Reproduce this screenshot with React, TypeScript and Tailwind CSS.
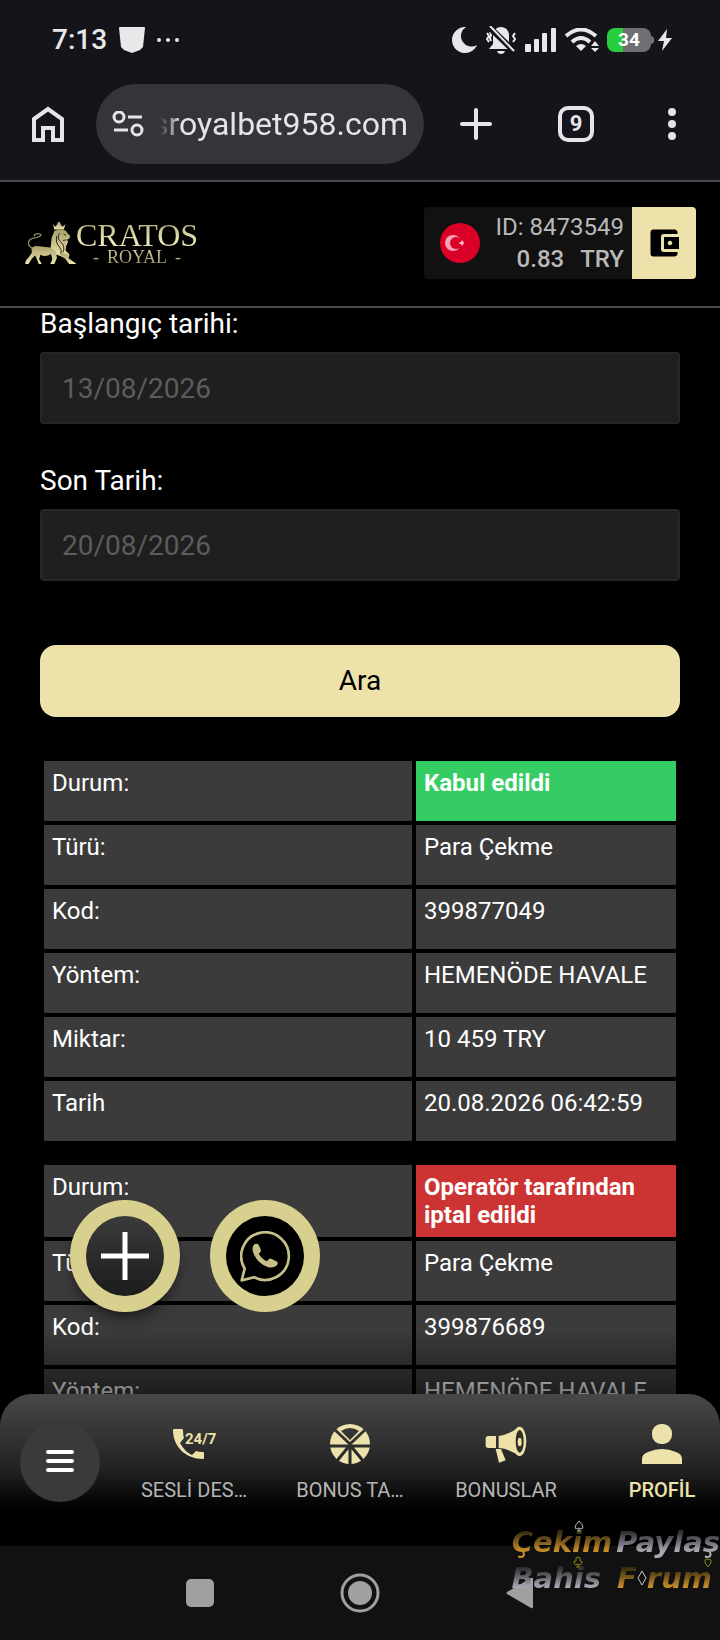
import { useState } from "react";
import type { ReactNode } from "react";
import { MdAccountBalanceWallet } from "react-icons/md";

type Status = "accepted" | "cancelled";

type Transaction = {
  status: Status;
  statusText: string;
  rows: { label: string; value: string }[];
};

const TRANSACTIONS: Transaction[] = [
  {
    status: "accepted",
    statusText: "Kabul edildi",
    rows: [
      { label: "Türü:", value: "Para Çekme" },
      { label: "Kod:", value: "399877049" },
      { label: "Yöntem:", value: "HEMENÖDE HAVALE" },
      { label: "Miktar:", value: "10 459 TRY" },
      { label: "Tarih", value: "20.08.2026 06:42:59" },
    ],
  },
  {
    status: "cancelled",
    statusText: "Operatör tarafından iptal edildi",
    rows: [
      { label: "Türü:", value: "Para Çekme" },
      { label: "Kod:", value: "399876689" },
      { label: "Yöntem:", value: "HEMENÖDE HAVALE" },
    ],
  },
];

const STATUS_STYLES: Record<Status, string> = {
  accepted: "bg-[#35cc63]",
  cancelled: "bg-[#cc3333]",
};

function StatusBar() {
  return (
    <div className="flex h-20 items-center justify-between pr-12 pl-[52px] text-[#e8e8ea]">
      <div className="flex items-center gap-3">
        <span className="text-[28px] font-medium">7:13</span>
        <svg className="h-[26px] w-[26px]" viewBox="0 0 26 26" fill="currentColor">
          <path d="M1 0h24q1 0 1 1l-2 19-3 3-8 3-8-3-3-3L0 1q0-1 1-1z" />
        </svg>
        <svg className="h-1 w-[22px]" viewBox="0 0 22 4" fill="currentColor">
          <circle cx="2" cy="2" r="2" />
          <circle cx="11" cy="2" r="2" />
          <circle cx="20" cy="2" r="2" />
        </svg>
      </div>
      <div className="flex items-center gap-2">
        <svg className="h-[26px] w-[25px]" viewBox="0 0 25 26" fill="currentColor">
          <path d="M14 0A13 13 0 1 0 25 18 10.500 10.500 0 0 1 14 0z" />
        </svg>
        <svg className="h-7 w-8" viewBox="0 0 32 28" fill="currentColor">
          <path d="M16 1c5 0 8 4 8 8v7l4 7H4l4-5V9c0-4 3-8 8-8z" />
          <path d="M12 25h8q-1 3-4 3t-4-3z" />
          <path
            d="M2 7l2 3-2 3 2 3M5 6l1 3-1 3 1 3M30 7l-2 3 2 3-2 3"
            fill="none"
            stroke="currentColor"
            strokeWidth="2"
          />
          <path d="M3 0l27 26" stroke="#15141a" strokeWidth="6" />
          <path d="M5 0l24 25" stroke="currentColor" strokeWidth="2" />
        </svg>
        <svg className="h-6 w-8" viewBox="0 0 32 24" fill="currentColor">
          <rect x="0" y="16" width="6" height="8" rx="1" />
          <rect x="9" y="11" width="5" height="13" rx="1" />
          <rect x="17" y="5" width="5" height="19" rx="1" />
          <rect x="26" y="0" width="5" height="24" rx="1" />
        </svg>
        <svg className="h-6 w-[34px]" viewBox="0 0 34 24" fill="none" stroke="currentColor">
          <path d="M1 8q15-13 30 0M7 14q9-8 18 0" strokeWidth="4" />
          <path d="M11 18q5-4 10 0l-5 5z" fill="currentColor" stroke="none" />
          <path d="M30 13l4 5h-8zM26 20h8l-4 4z" fill="currentColor" stroke="none" />
        </svg>
        <div className="flex items-center gap-1">
          <div className="flex items-center">
            <div className="flex h-6 w-11 items-center justify-center rounded-lg bg-linear-to-r from-[#25cf3e] from-37% to-[#707073] to-37% text-[19px] leading-6 font-bold text-white">
              34
            </div>
            <div className="h-2 w-[3px] rounded-r-full bg-[#707073]" />
          </div>
          <svg className="h-[22px] w-[14px]" viewBox="0 0 14 22" fill="currentColor">
            <path d="M9 0L0 12h6L4 22l10-13H8z" />
          </svg>
        </div>
      </div>
    </div>
  );
}

function BrowserToolbar() {
  return (
    <div className="flex h-[100px] items-center pr-9 pb-3 pl-8 text-[#e6e3ea]">
      <button type="button" aria-label="Ana sayfa">
        <svg className="h-9 w-8" viewBox="0 0 32 36" fill="none" stroke="currentColor" strokeWidth="4">
          <path d="M2 13L16 3l14 10v21h-9V22H11v12H2z" />
        </svg>
      </button>
      <div className="ml-8 flex h-20 min-w-0 flex-1 items-center overflow-hidden rounded-full bg-[#36343a] px-4">
        <svg className="h-[26px] w-8 shrink-0" viewBox="0 0 32 26" fill="none" stroke="currentColor" strokeWidth="3">
          <circle cx="7" cy="6" r="5" />
          <path d="M16 6h14M2 19h14" />
          <circle cx="25" cy="19" r="5" />
        </svg>
        <div className="ml-4 flex min-w-0 flex-1 justify-end overflow-hidden mask-l-from-[calc(100%-20px)] mask-l-to-100% text-[32px] leading-10">
          <span className="whitespace-nowrap">sroyalbet958.com</span>
        </div>
      </div>
      <button type="button" aria-label="Yeni sekme" className="ml-9">
        <svg className="size-8" viewBox="0 0 32 32" stroke="currentColor" strokeWidth="4" strokeLinecap="round">
          <path d="M16 2v28M2 16h28" />
        </svg>
      </button>
      <button
        type="button"
        className="ml-[66px] flex size-9 items-center justify-center rounded-[10px] border-4 border-[#e6e3ea] text-[22px] leading-6 font-bold"
      >
        9
      </button>
      <button type="button" aria-label="Menü" className="ml-[66px] flex w-6 justify-center">
        <svg className="h-8 w-2" viewBox="0 0 8 32" fill="currentColor">
          <circle cx="4" cy="4" r="4" />
          <circle cx="4" cy="16" r="4" />
          <circle cx="4" cy="28" r="4" />
        </svg>
      </button>
    </div>
  );
}

function LionLogo() {
  return (
    <svg className="h-[42px] w-[51px]" viewBox="0 0 153 127">
      <linearGradient id="lion-gold" x1="0" y1="0" x2="0" y2="1">
        <stop offset="0" stopColor="#a8a06c" />
        <stop offset="1" stopColor="#f0e6ac" />
      </linearGradient>
      <g fill="url(#lion-gold)">
        <path d="M84 6l7 8 6-7 2-7h6l2 7 6 7 9-8-5 17H88z" />
        <path d="M88 27q18-8 34-1l6 8 8 8-2 8-8 4 4 6-6 12-2 14 12 12-2 8-14 2-14-6-16-6-12-14 2-14 2-20z" />
        <path d="M19 80q4-10 24-7l32 4 18 12 3 20-8 18H76l6-14-4-16q-16 10-32 2l-4 14 8 14h-9l-7-18-4-8-10 10-10 16H0q0-12 10-20l10-14z" />
        <path d="M104 92l26 6 2 12 21 15v2h-20l-12-16-17-12z" />
      </g>
      <path
        d="M22 80Q4 68 12 56q6-8 22-9 12-2 14-8-4-6-15-3-9 3-3 7"
        fill="none"
        stroke="#8f8a63"
        strokeWidth="4"
      />
      <path
        d="M104 34q-10 16 4 26 14 14 6 32M96 42q-6 20 8 34 8 10 4 18M116 36l8 5M124 54l-10 2"
        fill="none"
        stroke="#2b2917"
        strokeWidth="3"
      />
    </svg>
  );
}

function SiteHeader() {
  return (
    <header className="flex h-[128px] items-center justify-between border-y-2 border-[#4a4a4d] bg-black pr-6 pb-[2px] pl-[25px]">
      <a href="#" className="flex items-center font-['Liberation_Serif',serif]">
        <LionLogo />
        <span className="flex flex-col items-center bg-linear-to-b from-[#b5ac74] via-[#f1ecc0] to-[#9a9360] bg-clip-text text-transparent">
          <span className="text-[32px] leading-7">CRATOS</span>
          <span className="flex gap-2 text-lg leading-4">
            <span>-</span>
            <span>ROYAL</span>
            <span>-</span>
          </span>
        </span>
      </a>
      <div className="flex h-[72px] overflow-hidden rounded-sm bg-[#111111]">
        <div className="flex items-center gap-4 pr-2 pl-4">
          <svg className="size-10" viewBox="0 0 40 40">
            <circle cx="20" cy="20" r="20" fill="#db0027" />
            <circle cx="13" cy="20" r="8" fill="#f6a3b5" />
            <circle cx="16" cy="20" r="6" fill="#db0027" />
            <path d="M24 20l-2 3-1-2-3-1 3-1 1-2z" fill="#fbc3cf" />
          </svg>
          <div className="text-right text-2xl leading-8 text-[#b9b9b9]">
            <p>ID: 8473549</p>
            <p className="flex justify-end gap-4 font-medium">
              <span>0.83</span>
              <span>TRY</span>
            </p>
          </div>
        </div>
        <button
          type="button"
          aria-label="Cüzdan"
          className="flex w-16 items-center justify-center bg-[#ede2a9] text-black"
        >
          <MdAccountBalanceWallet className="size-9" />
        </button>
      </div>
    </header>
  );
}

type DateFieldProps = {
  id: string;
  label: string;
  placeholder: string;
};

function DateField({ id, label, placeholder }: DateFieldProps) {
  const [value, setValue] = useState("");

  return (
    <div className="flex flex-col gap-3">
      <label htmlFor={id} className="text-[28px] leading-8 text-white">
        {label}
      </label>
      <input
        id={id}
        type="text"
        value={value}
        placeholder={placeholder}
        onChange={(e) => setValue(e.target.value)}
        className="h-[72px] w-full rounded-sm border-2 border-[#262626] bg-[#1f1f1f] px-5 text-[28px] text-white placeholder:text-[#5c5c5c]"
      />
    </div>
  );
}

function TransactionTable({ transaction }: { transaction: Transaction }) {
  const cell = "h-[60px] bg-[#3b3b3b] p-2 align-top";

  return (
    <table className="w-full table-fixed border-separate border-spacing-1 text-2xl leading-7 text-white">
      <colgroup>
        <col />
        <col className="w-[260px]" />
      </colgroup>
      <tbody>
        <tr>
          <td className={cell}>Durum:</td>
          <td className={`p-2 align-top font-bold ${STATUS_STYLES[transaction.status]}`}>
            {transaction.statusText}
          </td>
        </tr>
        {transaction.rows.map((row) => (
          <tr key={row.label}>
            <td className={cell}>{row.label}</td>
            <td className={cell}>{row.value}</td>
          </tr>
        ))}
      </tbody>
    </table>
  );
}

function FloatingButtons() {
  return (
    <div className="absolute bottom-[234px] left-[70px] flex gap-[30px]">
      <button
        type="button"
        aria-label="Ekle"
        className="flex h-28 w-[110px] items-center justify-center rounded-[50%] border-16 border-[#d8d08e] bg-linear-to-b from-[#3b3b3b] to-[#1c1c1c] shadow-lg shadow-black/40"
      >
        <svg className="size-12" viewBox="0 0 48 48" stroke="#ffffff" strokeWidth="5">
          <path d="M24 0v48M0 24h48" />
        </svg>
      </button>
      <button
        type="button"
        aria-label="WhatsApp"
        className="flex h-28 w-[110px] items-center justify-center rounded-[50%] border-16 border-[#d8d08e] bg-black"
      >
        <svg className="size-[51px]" viewBox="0 0 152 152" fill="none" stroke="#c6bf88" strokeWidth="8">
          <path d="M14 112A71 71 0 1 1 42 138L5 147z" strokeLinejoin="round" />
          <path
            d="M42 40q9-5 14 2l6 14q2 6-6 12 9 16 24 22 7-10 13-7l17 8q5 5 0 11-10 10-26 6Q49 96 38 60q-2-13 4-20z"
            fill="#c6bf88"
            stroke="none"
          />
        </svg>
      </button>
    </div>
  );
}

function SupportIcon() {
  return (
    <svg className="h-10 w-[42px] overflow-visible" viewBox="0 0 42 40" fill="#ede2a9">
      <path d="M1 5h8q1 0 1 2 0 4 1 7l-4 5q5 9 12 12l4-4q3 1 7 1 1 0 1 1v5q0 1-1 1C13 35 0 23 0 6q0-1 1-1z" />
      <text x="12" y="20" fontSize="15" fontWeight="700">
        24/7
      </text>
    </svg>
  );
}

function WheelIcon() {
  return (
    <svg className="size-10" viewBox="0 0 40 40">
      <mask id="wheel-gaps">
        <rect width="40" height="40" fill="#fff" />
        <path d="M0 22h40M20 20v20M20 21L6 38M20 21l14 17M20 20L3 4M20 20L37 4" stroke="#000" strokeWidth="3" />
        <path d="M11 7q9-6 18 0l-9 9z" fill="#000" />
      </mask>
      <circle cx="20" cy="20" r="20" fill="#ede2a9" mask="url(#wheel-gaps)" />
    </svg>
  );
}

function MegaphoneIcon() {
  return (
    <svg className="h-10 w-[42px]" viewBox="0 -8 122 120" fill="#ede2a9">
      <path d="M8 28h23v36H8q-8 0-8-8V36q0-8 8-8z" />
      <path d="M39 28Q72 24 99 0v88Q72 66 39 64z" />
      <ellipse cx="102" cy="44" rx="20" ry="44" />
      <ellipse cx="102" cy="44" rx="12" ry="34" fill="#2f2e27" />
      <ellipse cx="102" cy="46" rx="6" ry="13" />
      <path d="M30 67h16l14 34-20 7z" />
    </svg>
  );
}

function ProfileIcon() {
  return (
    <svg className="size-10" viewBox="0 0 40 40" fill="#ede2a9">
      <rect x="10" y="0" width="20" height="20" rx="9" />
      <path d="M0 40v-5q0-5 6-7 14-6 28 0 6 2 6 7v5z" />
    </svg>
  );
}

const NAV_ITEMS: { label: string; icon: ReactNode; active?: boolean }[] = [
  { label: "SESLİ DES…", icon: <SupportIcon /> },
  { label: "BONUS TA…", icon: <WheelIcon /> },
  { label: "BONUSLAR", icon: <MegaphoneIcon /> },
  { label: "PROFİL", icon: <ProfileIcon />, active: true },
];

function BottomNav() {
  return (
    <div className="absolute inset-x-0 bottom-0">
      <div className="h-16 bg-linear-to-b from-transparent to-black/50" />
      <div className="bg-linear-to-b from-black/50 to-black to-40%">
        <nav className="flex h-[152px] items-start overflow-hidden rounded-t-[32px] bg-linear-to-b from-[#484848] via-[#222222] to-black to-90% pt-7 pl-5">
          <button
            type="button"
            aria-label="Menü"
            className="mr-4 flex size-20 shrink-0 items-center justify-center rounded-full bg-[#3a3a3a]"
          >
            <svg className="h-6 w-7" viewBox="0 0 28 24" stroke="#ffffff" strokeWidth="4" strokeLinecap="round">
              <path d="M2 2h24M2 11h24M2 20h24" />
            </svg>
          </button>
          {NAV_ITEMS.map((item) => (
            <a
              key={item.label}
              href="#"
              className={
                item.active
                  ? "flex w-39 shrink-0 flex-col items-center gap-3 pt-[2px] text-xl leading-7 font-medium text-[#ede2a9]"
                  : "flex w-39 shrink-0 flex-col items-center gap-3 pt-[2px] text-xl leading-7 text-[#b5b5b5]"
              }
            >
              {item.icon}
              {item.label}
            </a>
          ))}
        </nav>
      </div>
    </div>
  );
}

function SystemNav() {
  return (
    <div className="flex h-[94px] items-center justify-center bg-[#111111]">
      <button type="button" aria-label="Son uygulamalar" className="flex w-40 justify-center">
        <span className="size-7 rounded-[5px] bg-[#a0a0a0]" />
      </button>
      <button type="button" aria-label="Ana ekran" className="flex w-40 justify-center">
        <svg className="size-10" viewBox="0 0 40 40" fill="#a0a0a0">
          <circle cx="20" cy="20" r="18" fill="none" stroke="#a0a0a0" strokeWidth="3" />
          <circle cx="20" cy="20" r="12" />
        </svg>
      </button>
      <button type="button" aria-label="Geri" className="flex w-40 justify-center">
        <svg className="h-8 w-7" viewBox="0 0 28 32" fill="#a0a0a0">
          <path d="M1 15L25 1q2-1 2 1v28q0 2-2 1L1 17q-1-1 0-2z" />
        </svg>
      </button>
    </div>
  );
}

function Watermark() {
  const gold = "bg-linear-to-b from-[#33290f] from-20% to-[#c98e28] to-75% bg-clip-text text-transparent";
  const silver = "bg-linear-to-b from-[#2c2c30] from-20% to-[#aaa8b3] to-75% bg-clip-text text-transparent";

  return (
    <div className="pointer-events-none absolute right-0 bottom-[44px] flex flex-col items-end font-['DejaVu_Sans',sans-serif] text-[29px] leading-9 font-bold italic">
      <p className="relative flex gap-1">
        <span className={gold}>Çekim</span>
        <span className={silver}>Paylaş</span>
        <svg
          className="absolute -top-1 left-[62px] h-3 w-[10px]"
          viewBox="0 0 10 12"
          fill="none"
          stroke="#b4b2bd"
          strokeWidth="1"
        >
          <path d="M5 1Q9 5 9 8q-2 2-4 0-2 2-4 0 0-3 4-7zM5 8v3M3 11h4" />
        </svg>
        <svg
          className="absolute right-2 -bottom-2 h-[10px] w-2"
          viewBox="0 0 8 10"
          fill="none"
          stroke="#8a8a10"
          strokeWidth="1"
        >
          <path d="M4 9Q0 5 1 2q2-2 3 0 1-2 3 0 1 3-3 7z" />
        </svg>
      </p>
      <p className="relative flex items-center gap-4 pr-2">
        <span className={silver}>Bahis</span>
        <span className="flex items-center">
          <span className={gold}>F</span>
          <svg className="h-4 w-[10px]" viewBox="0 0 10 16" fill="none" stroke="#c9c7d0" strokeWidth="1">
            <path d="M5 1l4 7-4 7-4-7z" />
          </svg>
          <span className={gold}>rum</span>
        </span>
        <svg
          className="absolute -top-1 left-[62px] h-3 w-[10px]"
          viewBox="0 0 10 12"
          fill="none"
          stroke="#8a8a10"
          strokeWidth="1"
        >
          <path d="M3 5q-1-4 2-4t2 4q3 0 2 2-1 3-4 1-3 2-4-1-1-2 2-2zM5 8v3M3 11h4" />
        </svg>
      </p>
    </div>
  );
}

export default function App() {
  return (
    <div className="relative flex h-screen flex-col overflow-hidden bg-black font-[Roboto,sans-serif]">
      <div className="bg-[#15141a]">
        <StatusBar />
        <BrowserToolbar />
      </div>
      <SiteHeader />
      <div className="relative min-h-0 flex-1 overflow-hidden">
        <main className="flex flex-col px-10">
          <form className="flex flex-col" onSubmit={(e) => e.preventDefault()}>
            <div className="flex flex-col gap-[41px]">
              <DateField id="start-date" label="Başlangıç tarihi:" placeholder="13/08/2026" />
              <DateField id="end-date" label="Son Tarih:" placeholder="20/08/2026" />
            </div>
            <button type="submit" className="mt-16 h-[72px] rounded-2xl bg-[#ede2a9] text-[28px] text-black">
              Ara
            </button>
          </form>
          <div className="mt-10 flex flex-col gap-4">
            {TRANSACTIONS.map((transaction) => (
              <TransactionTable key={transaction.statusText} transaction={transaction} />
            ))}
          </div>
        </main>
        <FloatingButtons />
        <BottomNav />
      </div>
      <SystemNav />
      <Watermark />
    </div>
  );
}
